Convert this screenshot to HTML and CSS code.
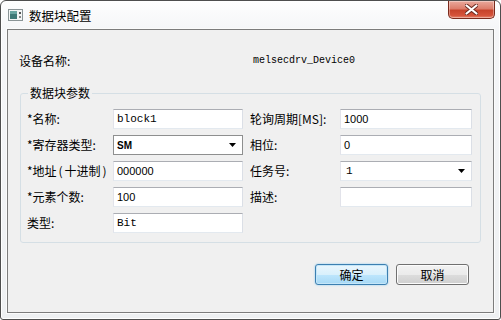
FILE: index.html
```html
<!DOCTYPE html>
<html>
<head>
<meta charset="utf-8">
<link rel="stylesheet" href="styles.css">
</head>
<body>
<div class="window">
  <div class="titlebar">
    <svg class="app-icon" width="15" height="12" viewBox="0 0 15 12">
      <rect x="0.5" y="0.5" width="14" height="11" fill="#f4f6f6" stroke="#8a9496"/>
      <rect x="2" y="2" width="7" height="8" fill="#3f7a78"/>
      <rect x="2" y="2" width="7" height="3" fill="#6aa6a2"/>
      <rect x="11" y="3" width="2" height="2" fill="#555"/>
      <rect x="11" y="7" width="2" height="2" fill="#888"/>
    </svg>
    <span class="title">数据块配置</span>
    <div class="close">
      <svg width="13" height="11" viewBox="0 0 13 11">
        <path d="M1.5 1.5 L11.5 9.5 M11.5 1.5 L1.5 9.5" stroke="#6a2a20" stroke-width="4" stroke-linecap="round"/>
        <path d="M1.5 1.5 L11.5 9.5 M11.5 1.5 L1.5 9.5" stroke="#ffffff" stroke-width="2.2" stroke-linecap="round"/>
      </svg>
    </div>
  </div>
  <div class="client">
    <div class="device-row">
      <span class="dev-label">设备名称:</span><span class="dev-value">melsecdrv_Device0</span>
    </div>
    <fieldset class="group">
      <legend>数据块参数</legend>
      <div class="grid">
        <span class="lbl">*名称:</span>
        <div class="edit mono">block1</div>
        <span class="lbl lbl2">轮询周期[MS]:</span>
        <div class="edit">1000</div>

        <span class="lbl">*寄存器类型:</span>
        <div class="edit combo"><span>SM</span><svg class="arrow" width="7" height="4" viewBox="0 0 7 4"><path d="M0 0 H7 L3.5 4 Z" fill="#000"/></svg></div>
        <span class="lbl lbl2">相位:</span>
        <div class="edit">0</div>

        <span class="lbl">*地址<span class="paren">(</span>十进制<span class="paren">)</span></span>
        <div class="edit">000000</div>
        <span class="lbl lbl2">任务号:</span>
        <div class="edit combo2"><span class="mono">1</span><svg class="arrow" width="7" height="4" viewBox="0 0 7 4"><path d="M0 0 H7 L3.5 4 Z" fill="#000"/></svg></div>

        <span class="lbl">*元素个数:</span>
        <div class="edit">100</div>
        <span class="lbl lbl2">描述:</span>
        <div class="edit"></div>

        <span class="lbl">类型:</span>
        <div class="edit mono">Bit</div>
      </div>
    </fieldset>
    <div class="buttons">
      <button class="btn default">确定</button>
      <button class="btn">取消</button>
    </div>
  </div>
</div>
</body>
</html>
```
FILE: styles.css
```css
html, body {
  margin: 0;
  padding: 0;
  background: #ffffff;
}

.window {
  width: 501px;
  height: 320px;
  box-sizing: border-box;
  border: 1px solid #4e4e4e;
  border-radius: 6px 6px 3px 3px;
  background: linear-gradient(to bottom, #fefefe 0, #f5f6f8 28px, #eef0f2 100%);
  box-shadow: inset 0 0 0 1px #ffffff;
  display: flex;
  flex-direction: column;
  font-family: "Noto Sans CJK SC", "Noto Sans", sans-serif;
  font-size: 12px;
  color: #000;
  overflow: hidden;
}

.titlebar {
  height: 28px;
  flex: none;
  display: flex;
  align-items: flex-start;
}

.app-icon {
  margin: 8px 0 0 7px;
  flex: none;
}

.title {
  margin: 6px 0 0 6px;
  line-height: 17px;
  font-size: 12.5px;
}

.close {
  margin-left: auto;
  margin-right: 5px;
  width: 47px;
  height: 18px;
  box-sizing: border-box;
  border: 1px solid #7a2a1c;
  border-top: none;
  border-radius: 0 0 5px 5px;
  background: linear-gradient(to bottom, #e9a99c 0, #dc7d6b 45%, #c7432b 55%, #d5533a 85%, #e6876f 100%);
  box-shadow: inset 0 0 0 1px rgba(255, 255, 255, 0.35);
  display: flex;
  align-items: center;
  justify-content: center;
}

.client {
  flex: 1;
  margin: 0 6px 6px;
  border: 1px solid #7c7c7c;
  background: #f0f0f0;
  box-shadow: 0 0 0 1px #fbfbfb;
  display: flex;
  flex-direction: column;
}

.device-row {
  margin-top: 23px;
  padding-left: 11px;
  line-height: 16px;
  display: flex;
  align-items: center;
}

.dev-label {
  width: 234px;
  flex: none;
}

.dev-value {
  font-family: "Liberation Mono", monospace;
  font-size: 10px;
}

.group {
  margin: 17px 0 0 12px;
  width: 461px;
  box-sizing: border-box;
  border: 1px solid #d5dfe5;
  border-radius: 3px;
  padding: 9px 0 9px 6px;
  min-width: 0;
}

.group legend {
  padding: 0 2px;
  margin-left: 1px;
  line-height: 14px;
  font-size: 12px;
}

.grid {
  display: grid;
  grid-template-columns: 86px 130px 97px 132px;
  grid-auto-rows: 20px;
  row-gap: 6px;
  align-items: center;
}

.lbl {
  line-height: 16px;
  white-space: nowrap;
}

.lbl2 {
  margin-left: 7px;
}

.paren {
  display: inline-block;
  width: 8px;
  text-align: center;
}

.edit {
  height: 20px;
  box-sizing: border-box;
  background: #ffffff;
  border: 1px solid;
  border-color: #abadb3 #dbdfe6 #e3e9ef #e2e3ea;
  padding-left: 3px;
  display: flex;
  align-items: center;
  font-family: "Liberation Sans", sans-serif;
  font-size: 11px;
}

.mono {
  font-family: "Liberation Mono", monospace;
  font-size: 11px;
}

.combo {
  border-color: #8e8f8f;
  padding-left: 3px;
  padding-right: 6px;
  font-weight: bold;
  font-size: 10px;
}

.combo2 {
  padding-left: 5px;
  padding-right: 6px;
}

.arrow {
  margin-left: auto;
  flex: none;
}

.buttons {
  margin-top: 21px;
  padding-right: 24px;
  display: flex;
  justify-content: flex-end;
  gap: 8px;
}

.btn {
  width: 73px;
  height: 21px;
  box-sizing: border-box;
  padding: 0;
  border: 1px solid #707070;
  border-radius: 3px;
  background: linear-gradient(to bottom, #f2f2f2 0, #ebebeb 50%, #dddddd 50%, #cfcfcf 100%);
  box-shadow: inset 0 0 0 1px #fcfcfc;
  font-family: "Noto Sans CJK SC", sans-serif;
  font-size: 12px;
  color: #000;
  line-height: 17px;
}

.btn.default {
  border-color: #3c7fb1;
  background: linear-gradient(to bottom, #eaf6fd 0, #d9f0fc 50%, #bee6fd 50%, #a7d9f5 100%);
  box-shadow: inset 0 0 0 1px #c5e6f8, 0 0 2px #7fc6ee;
}
```
